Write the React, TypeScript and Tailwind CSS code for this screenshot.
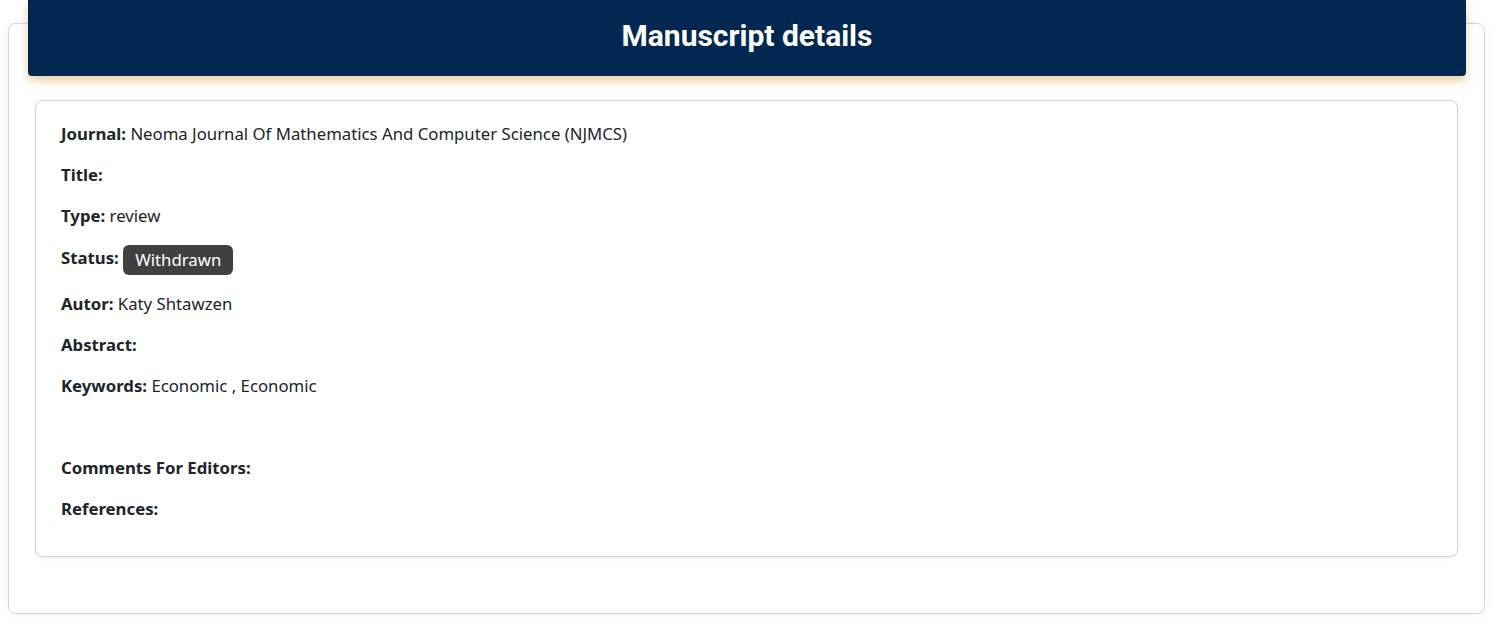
import React from "react";

const FIELDS: { label: string; value?: React.ReactNode }[] = [
  { label: "Journal:", value: "Neoma Journal Of Mathematics And Computer Science (NJMCS)" },
  { label: "Title:" },
  { label: "Type:", value: "review" },
  {
    label: "Status:",
    value: (
      <span className="inline-block rounded-[6px] bg-[#404040] px-3 py-[3px] text-white leading-6 align-middle">
        Withdrawn
      </span>
    ),
  },
  { label: "Autor:", value: "Katy Shtawzen" },
  { label: "Abstract:" },
  { label: "Keywords:", value: "Economic , Economic" },
];

export default function App() {
  return (
    <div className="min-h-[625px] bg-white px-2 pt-[23px] pb-3 font-['Noto_Sans','Open_Sans',sans-serif] text-[#212529]">
      <div className="rounded-lg border border-[#d6d6d6] bg-white pb-14 shadow-[0_0_10px_rgba(0,0,0,0.06)]">
        <div className="mt-[-24px] ml-[19px] mr-[18px] flex h-[76px] items-center justify-center rounded-b-[4px] bg-[#022851] pb-[5px] shadow-[0_5px_10px_rgba(215,150,60,0.45)]">
          <h1 className="font-['Roboto',sans-serif] text-[30px] font-bold text-white">Manuscript details</h1>
        </div>

        <div className="mx-[26px] mt-6 rounded-lg border border-[#d4d4d4] bg-white px-[25px] pt-[21px] pb-[18px] text-[16.75px] shadow-[0_1px_4px_rgba(0,0,0,0.08)]">
          {FIELDS.map((f) => (
            <p key={f.label} className="mb-[17px] leading-6">
              <b className="font-bold">{f.label}</b> {f.value}
            </p>
          ))}
          <p className="mb-[17px] h-6" />
          <p className="mb-[17px] leading-6"><b className="font-bold">Comments For Editors:</b></p>
          <p className="mb-[17px] leading-6"><b className="font-bold">References:</b></p>
        </div>
      </div>
    </div>
  );
}
